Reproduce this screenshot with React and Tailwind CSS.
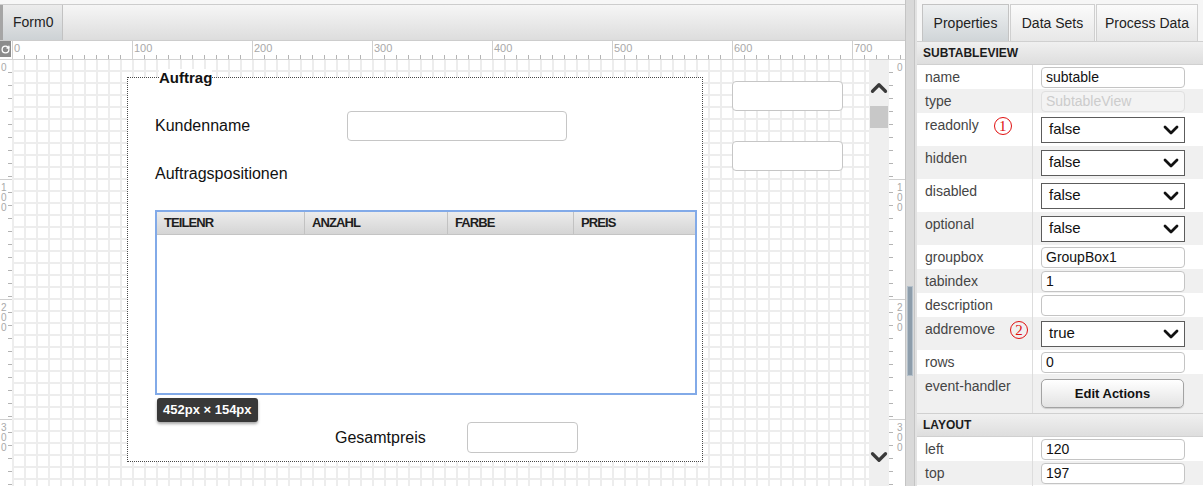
import { ChevronDown, ChevronUp, RotateCw } from 'lucide-react';

const topMarks = [0, 100, 200, 300, 400, 500, 600, 700];
const sideMarks = [0, 100, 200, 300];

const tableCols = [
  { name: 'TEILENR', w: 'w-[148px]' },
  { name: 'ANZAHL', w: 'w-[143px]' },
  { name: 'FARBE', w: 'w-[126px]' },
  { name: 'PREIS', w: 'flex-1' },
];

const generalProps = [
  { label: 'name', kind: 'input', value: 'subtable' },
  { label: 'type', kind: 'disabled', value: 'SubtableView' },
  { label: 'readonly', kind: 'select', value: 'false', mark: '1' },
  { label: 'hidden', kind: 'select', value: 'false' },
  { label: 'disabled', kind: 'select', value: 'false' },
  { label: 'optional', kind: 'select', value: 'false' },
  { label: 'groupbox', kind: 'input', value: 'GroupBox1' },
  { label: 'tabindex', kind: 'input', value: '1' },
  { label: 'description', kind: 'input', value: '' },
  { label: 'addremove', kind: 'select', value: 'true', mark: '2' },
  { label: 'rows', kind: 'input', value: '0' },
  { label: 'event-handler', kind: 'button', value: 'Edit Actions' },
];

const layoutProps = [
  { label: 'left', kind: 'input', value: '120' },
  { label: 'top', kind: 'input', value: '197' },
  { label: '', kind: 'input', value: '' },
];

function TopRuler() {
  return (
    <div className="flex flex-1 overflow-hidden bg-white">
      {topMarks.map((m) => (
        <div key={m} className="flex w-[120px] shrink-0 flex-col border-l border-[#cfcfcf]">
          <span className="pl-[1px] pt-[2px] text-[11px] leading-[11px] text-[#a9a9a9]">{m}</span>
          <div className="mt-auto h-[4px] bg-[repeating-linear-gradient(to_right,transparent_0_11px,#b4b4b4_11px_12px)]" />
        </div>
      ))}
    </div>
  );
}

function Digits({ value }) {
  return (
    <div className="flex flex-col pt-[3px] text-[10px] leading-[10px] text-[#a9a9a9]">
      {String(value).split('').map((d, i) => (
        <span key={i}>{d}</span>
      ))}
    </div>
  );
}

function LeftRuler() {
  return (
    <div className="flex w-[12px] shrink-0 flex-col overflow-hidden bg-white">
      {sideMarks.map((m) => (
        <div key={m} className="flex h-[120px] shrink-0 border-b border-[#cfcfcf]">
          <div className="pl-[1px]">
            <Digits value={m} />
          </div>
          <div className="ml-auto w-[4px] bg-[repeating-linear-gradient(to_bottom,transparent_0_12px,#b4b4b4_12px_13px)]" />
        </div>
      ))}
    </div>
  );
}

function RightRuler() {
  return (
    <div className="flex w-[16px] shrink-0 flex-col overflow-hidden bg-white">
      {sideMarks.map((m) => (
        <div key={m} className="flex h-[120px] shrink-0 border-b border-[#cfcfcf]">
          <div className="w-[4px] bg-[repeating-linear-gradient(to_bottom,transparent_0_12px,#b4b4b4_12px_13px)]" />
          <div className="pl-[4px]">
            <Digits value={m} />
          </div>
        </div>
      ))}
    </div>
  );
}

function Field({ className }) {
  return <div className={`absolute rounded-[4px] border border-[#c6c6c6] bg-white ${className}`} />;
}

function Canvas() {
  return (
    <div className="relative w-[857px] shrink-0 overflow-hidden bg-white bg-[repeating-linear-gradient(to_right,#ededed_0_2px,transparent_2px_12px),repeating-linear-gradient(to_bottom,transparent_0_10px,#ededed_10px_12px)]">
      {/* group box "Auftrag" */}
      <div className="absolute left-[115px] top-[17px] h-[385px] w-[576px] border border-dotted border-[#4a4a4a] bg-white">
        <span className="absolute left-[31px] top-[-9px] bg-white text-[15px] font-bold leading-[18px] text-[#111]">
          Auftrag
        </span>

        <span className="absolute left-[27px] top-[39px] text-[16px] leading-[18px] text-[#111]">Kundenname</span>
        <Field className="left-[219px] top-[33px] h-[30px] w-[220px]" />

        <span className="absolute left-[27px] top-[87px] text-[16px] leading-[18px] text-[#111]">
          Auftragspositionen
        </span>

        <div className="absolute left-[27px] top-[132px] flex h-[185px] w-[542px] flex-col border-2 border-[#82aae8] bg-white">
          <div className="flex h-[23px] border-b border-[#c4c4c4] bg-linear-to-b from-[#ececec] to-[#d5d5d5]">
            {tableCols.map((c, i) => (
              <div
                key={c.name}
                className={`${c.w} flex items-center pl-[7px] text-[13px] font-bold tracking-[-0.9px] text-[#1e1e1e] ${i < 3 ? 'border-r border-[#c2c2c2]' : ''}`}
              >
                {c.name}
              </div>
            ))}
          </div>
        </div>

        <div className="absolute left-[29px] top-[320px] flex h-[24px] items-center rounded-[3px] bg-[#383838] px-[6px] text-[13px] font-bold text-white shadow-[0_2px_3px_rgba(0,0,0,0.35)]">
          452px × 154px
        </div>

        <span className="absolute left-[207px] top-[351px] text-[16px] leading-[18px] text-[#111]">Gesamtpreis</span>
        <Field className="left-[339px] top-[344px] h-[31px] w-[111px]" />
      </div>

      <Field className="left-[720px] top-[21px] h-[30px] w-[111px]" />
      <Field className="left-[720px] top-[81px] h-[30px] w-[111px]" />
    </div>
  );
}

function Scrollbar() {
  return (
    <div className="flex w-[20px] shrink-0 flex-col items-center bg-[#efefef] pb-[16px] pt-[15px]">
      <ChevronUp size={26} strokeWidth={3} className="text-[#3a3a3a]" />
      <div className="mt-[5px] h-[22px] w-[18px] bg-[#c8c8c8]" />
      <div className="flex-1" />
      <ChevronDown size={26} strokeWidth={3} className="text-[#3a3a3a]" />
    </div>
  );
}

function Mark({ n }) {
  return (
    <span className="ml-[15px] mt-[4px] flex h-[18px] w-[18px] items-center justify-center rounded-full border border-[#e01010] font-['Liberation_Serif',serif] text-[15px] leading-none text-[#e01010]">
      {n}
    </span>
  );
}

function Value({ p }) {
  if (p.kind === 'select') {
    return (
      <div className="flex h-[26px] w-[144px] items-center justify-between border border-[#5c5c5c] bg-white pl-[7px] pr-[1px] text-[15px] text-[#111]">
        <span>{p.value}</span>
        <ChevronDown size={24} strokeWidth={2.8} className="text-[#111]" />
      </div>
    );
  }
  if (p.kind === 'button') {
    return (
      <div className="flex h-[29px] w-[143px] items-center justify-center rounded-[5px] border border-[#a3a3a3] bg-linear-to-b from-white to-[#e3e3e3] text-[13px] font-bold text-[#111] shadow-[0_1px_1px_rgba(0,0,0,0.15)]">
        {p.value}
      </div>
    );
  }
  if (p.kind === 'disabled') {
    return (
      <div className="flex h-[21px] w-[144px] items-center rounded-[4px] border border-[#e0e0e0] bg-[#f3f3f3] px-[4px] text-[14px] text-[#cccccc]">
        {p.value}
      </div>
    );
  }
  return (
    <div className="flex h-[21px] w-[144px] items-center rounded-[4px] border border-[#c4c4c4] bg-white px-[4px] text-[14px] text-[#111]">
      {p.value}
    </div>
  );
}

function PropRow({ p, odd }) {
  const height = p.kind === 'select' ? 'h-[33px]' : p.kind === 'button' ? 'h-[39px]' : 'h-[24px]';
  return (
    <div className={`flex shrink-0 ${height} ${odd ? 'bg-[#f0f0f0]' : 'bg-white'}`}>
      <div className="flex w-[116px] shrink-0 items-start border-r border-[#dddddd] pl-[8px]">
        <span className="text-[14px] leading-[24px] text-[#454545]">{p.label}</span>
        {p.mark && <Mark n={p.mark} />}
      </div>
      <div className="flex items-center pl-[8px]">
        <Value p={p} />
      </div>
    </div>
  );
}

function SectionHeader({ title }) {
  return (
    <div className="flex h-[24px] shrink-0 items-center border-y border-[#d0d0d0] bg-linear-to-b from-[#f0f0f0] to-[#dedede] pl-[6px] text-[12px] font-bold text-[#1c1c1c]">
      {title}
    </div>
  );
}

function PropertiesPanel() {
  return (
    <div className="flex flex-1 flex-col overflow-hidden border-l-2 border-[#e2e2e2] bg-white">
      <div className="flex h-[41px] shrink-0 gap-[1px] bg-[#f6f6f6] pl-[5px] pt-[4px]">
        <div className="flex w-[87px] items-center justify-center border border-b-0 border-[#c3c3c3] bg-linear-to-b from-[#eef0f1] to-[#d0d5d8] text-[14px] text-[#222]">
          Properties
        </div>
        <div className="flex w-[85px] items-center justify-center border border-b-0 border-[#cfcfcf] bg-linear-to-b from-[#fbfbfb] to-[#e7e7e7] text-[14px] text-[#222]">
          Data Sets
        </div>
        <div className="flex w-[102px] items-center justify-center border border-b-0 border-[#cfcfcf] bg-linear-to-b from-[#fbfbfb] to-[#e7e7e7] text-[14px] text-[#222]">
          Process Data
        </div>
      </div>
      <SectionHeader title="SUBTABLEVIEW" />
      {generalProps.map((p, i) => (
        <PropRow key={p.label} p={p} odd={i % 2 === 1} />
      ))}
      <SectionHeader title="LAYOUT" />
      {layoutProps.map((p, i) => (
        <PropRow key={i} p={p} odd={i % 2 === 1} />
      ))}
    </div>
  );
}

export default function App() {
  return (
    <div className="flex h-[486px] w-[1203px] overflow-hidden bg-white font-['Liberation_Sans',Arial,sans-serif]">
      {/* Designer */}
      <div className="flex w-[905px] shrink-0 flex-col">
        <div className="h-[4px] shrink-0 bg-[#f7f7f7]" />
        <div className="flex h-[37px] shrink-0 border-y border-[#cdcdcd] bg-linear-to-b from-[#f6f6f6] to-[#dddddd]">
          <div className="flex w-[63px] items-center border-l-[3px] border-r border-l-[#a5a5a5] border-r-[#c2c2c2] bg-linear-to-b from-[#ececec] to-[#cdd2d5] pl-[10px] text-[14px] text-[#222]">
            Form0
          </div>
        </div>
        <div className="flex h-[19px] shrink-0 border-b border-[#d4d4d4]">
          <div className="w-[12px] shrink-0 bg-white">
            <div className="flex h-[16px] w-[11px] items-center justify-center bg-[#8b8b8b]">
              <RotateCw size={9} strokeWidth={3.5} className="text-white" />
            </div>
          </div>
          <TopRuler />
        </div>
        <div className="flex min-h-0 flex-1">
          <LeftRuler />
          <Canvas />
          <Scrollbar />
          <RightRuler />
        </div>
      </div>

      {/* Splitter */}
      <div className="flex w-[10px] shrink-0 flex-col items-center border-x border-[#c4c4c4] bg-[#d9d9d9] pt-[286px]">
        <div className="h-[90px] w-[6px] border border-[#b4c0ca] bg-[#8d9dab]" />
      </div>

      <PropertiesPanel />
    </div>
  );
}
